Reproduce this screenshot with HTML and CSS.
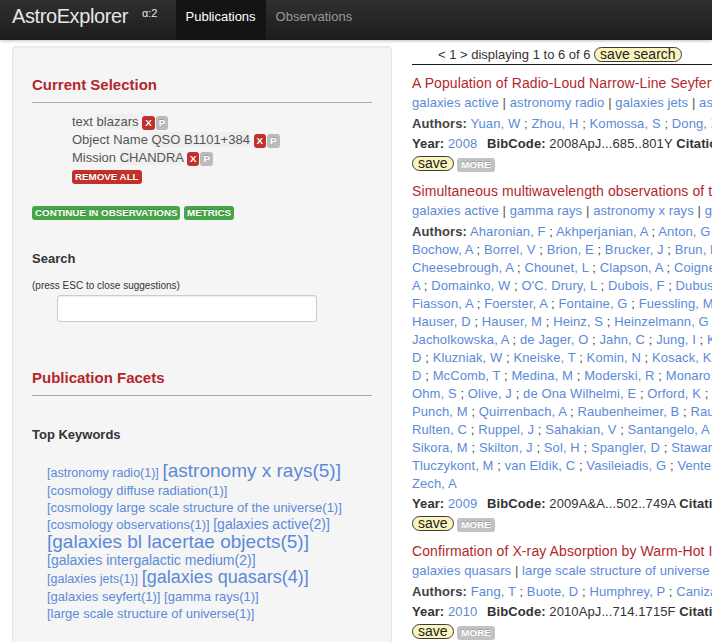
FILE: index.html
```html
<!DOCTYPE html>
<html lang="en">
<head>
<meta charset="utf-8">
<title>AstroExplorer</title>
<link rel="stylesheet" href="styles.css">
</head>
<body>
<header class="navbar">
  <a class="brand" href="#">AstroExplorer<sup>α:2</sup></a>
  <ul class="nav">
    <li class="active"><a href="#">Publications</a></li>
    <li><a href="#">Observations</a></li>
  </ul>
</header>

<div class="page">
  <aside class="sidebar">
    <h3 class="section-title">Current Selection</h3>
    <hr class="rule">
    <ul class="selection">
      <li>text <span class="sel-value">blazars</span> <span class="label label-danger">x</span><span class="label label-muted">p</span></li>
      <li>Object Name <span class="sel-value">QSO B1101+384</span> <span class="label label-danger">x</span><span class="label label-muted">p</span></li>
      <li>Mission <span class="sel-value">CHANDRA</span> <span class="label label-danger">x</span><span class="label label-muted">p</span></li>
      <li><span class="label label-danger">Remove all</span></li>
    </ul>
    <div class="actions"><span class="label label-success">Continue in observations</span> <span class="label label-success">Metrics</span></div>

    <h5 class="sub-title search-title">Search</h5>
    <p class="hint">(press ESC to close suggestions)</p>
    <div class="search-box"><input type="text" class="search-input"></div>

    <h3 class="section-title facets-title">Publication Facets</h3>
    <hr class="rule">
    <h5 class="sub-title kw-title">Top Keywords</h5>
    <div class="cloud">
      <a class="tag t1" href="#">[astronomy radio(1)]</a>
      <a class="tag t5" href="#">[astronomy x rays(5)]</a>
      <a class="tag t2" href="#">[cosmology diffuse radiation(1)]</a>
      <a class="tag t2" href="#">[cosmology large scale structure of the universe(1)]</a>
      <a class="tag t2" href="#">[cosmology observations(1)]</a>
      <a class="tag t3" href="#">[galaxies active(2)]</a>
      <a class="tag t5" href="#">[galaxies bl lacertae objects(5)]</a>
      <a class="tag t3" href="#">[galaxies intergalactic medium(2)]</a>
      <a class="tag t1" href="#">[galaxies jets(1)]</a>
      <a class="tag t4" href="#">[galaxies quasars(4)]</a>
      <a class="tag t2" href="#">[galaxies seyfert(1)]</a>
      <a class="tag t2" href="#">[gamma rays(1)]</a>
      <a class="tag t2" href="#">[large scale structure of universe(1)]</a>
    </div>
  </aside>

  <main class="results">
    <div class="paging">&lt; 1 &gt; displaying 1 to 6 of 6 <span class="pill">save search</span></div>

    <article class="pub">
      <h4 class="pub-title">A Population of Radio-Loud Narrow-Line Seyfert 1 Galaxies with Blazar-Like Properties?</h4>
      <div class="pub-kw"><a href="#">galaxies active</a> <span class="sep">|</span> <a href="#">astronomy radio</a> <span class="sep">|</span> <a href="#">galaxies jets</a> <span class="sep">|</span> <a href="#">astronomy x rays</a> <span class="sep">|</span> <a href="#">galaxies seyfert</a></div>
      <div class="pub-authors"><b>Authors:</b> <a href="#">Yuan, W</a> <span class="sep">;</span> <a href="#">Zhou, H</a> <span class="sep">;</span> <a href="#">Komossa, S</a> <span class="sep">;</span> <a href="#">Dong, X</a> <span class="sep">;</span> <a href="#">Wang, T</a> <span class="sep">;</span> <a href="#">Lu, H</a> <span class="sep">;</span> <a href="#">Bai, J</a></div>
      <div class="pub-meta"><b>Year:</b> <a class="year" href="#">2008</a> <b>BibCode:</b> 2008ApJ...685..801Y <b>Citations:</b> 139</div>
      <div class="pub-actions"><span class="pill">save</span> <span class="label label-light">More</span></div>
    </article>

    <article class="pub">
      <h4 class="pub-title">Simultaneous multiwavelength observations of the second exceptional γ-ray flare of PKS 2155-304 in July 2006</h4>
      <div class="pub-kw"><a href="#">galaxies active</a> <span class="sep">|</span> <a href="#">gamma rays</a> <span class="sep">|</span> <a href="#">astronomy x rays</a> <span class="sep">|</span> <a href="#">galaxies bl lacertae objects</a></div>
      <div class="pub-authors"><b>Authors:</b> <a href="#">Aharonian, F</a> ; <a href="#">Akhperjanian, A</a> ; <a href="#">Anton, G</a> ; <a href="#">Barres de Almeida, U</a> ; <a href="#">Bazer-Bachi, A</a> ; <a href="#">Becherini, Y</a> ;<br>
<a href="#">Bochow, A</a> ; <a href="#">Borrel, V</a> ; <a href="#">Brion, E</a> ; <a href="#">Brucker, J</a> ; <a href="#">Brun, F</a> ; <a href="#">Brun, P</a> ; <a href="#">Bühler, R</a> ; <a href="#">Bulik, T</a> ;<br>
<a href="#">Cheesebrough, A</a> ; <a href="#">Chounet, L</a> ; <a href="#">Clapson, A</a> ; <a href="#">Coignet, G</a> ; <a href="#">Costamante, L</a> ; <a href="#">Djannati-Ataï,</a><br>
<a href="#">A</a> ; <a href="#">Domainko, W</a> ; <a href="#">O'C. Drury, L</a> ; <a href="#">Dubois, F</a> ; <a href="#">Dubus, G</a> ; <a href="#">Dyks, J</a> ; <a href="#">Dyrda, M</a> ;<br>
<a href="#">Fiasson, A</a> ; <a href="#">Foerster, A</a> ; <a href="#">Fontaine, G</a> ; <a href="#">Fuessling, M</a> ; <a href="#">Gabici, S</a> ; <a href="#">Gallant, Y</a> ;<br>
<a href="#">Hauser, D</a> ; <a href="#">Hauser, M</a> ; <a href="#">Heinz, S</a> ; <a href="#">Heinzelmann, G</a> ; <a href="#">Henri, G</a> ; <a href="#">Hermann, G</a> ;<br>
<a href="#">Jacholkowska, A</a> ; <a href="#">de Jager, O</a> ; <a href="#">Jahn, C</a> ; <a href="#">Jung, I</a> ; <a href="#">Katarzyński, K</a> ; <a href="#">Khangulyan,</a><br>
<a href="#">D</a> ; <a href="#">Kluzniak, W</a> ; <a href="#">Kneiske, T</a> ; <a href="#">Komin, N</a> ; <a href="#">Kosack, K</a> ; <a href="#">Lohse, T</a> ; <a href="#">Maurin,</a><br>
<a href="#">D</a> ; <a href="#">McComb, T</a> ; <a href="#">Medina, M</a> ; <a href="#">Moderski, R</a> ; <a href="#">Monaro, G</a> ; <a href="#">Moulin, E</a> ;<br>
<a href="#">Ohm, S</a> ; <a href="#">Olive, J</a> ; <a href="#">de Ona Wilhelmi, E</a> ; <a href="#">Orford, K</a> ; <a href="#">Ostrowski, M</a> ; <a href="#">Panter, M</a> ;<br>
<a href="#">Punch, M</a> ; <a href="#">Quirrenbach, A</a> ; <a href="#">Raubenheimer, B</a> ; <a href="#">Raue, M</a> ; <a href="#">Rayner, S</a> ;<br>
<a href="#">Rulten, C</a> ; <a href="#">Ruppel, J</a> ; <a href="#">Sahakian, V</a> ; <a href="#">Santangelo, A</a> ; <a href="#">Schlickeiser, R</a> ;<br>
<a href="#">Sikora, M</a> ; <a href="#">Skilton, J</a> ; <a href="#">Sol, H</a> ; <a href="#">Spangler, D</a> ; <a href="#">Stawarz, Ł</a> ; <a href="#">Steenkamp, R</a> ;<br>
<a href="#">Tluczykont, M</a> ; <a href="#">van Eldik, C</a> ; <a href="#">Vasileiadis, G</a> ; <a href="#">Venter, C</a> ; <a href="#">Venter, L</a> ;<br>
<a href="#">Zech, A</a></div>
      <div class="pub-meta"><b>Year:</b> <a class="year" href="#">2009</a> <b>BibCode:</b> 2009A&amp;A...502..749A <b>Citations:</b> 88</div>
      <div class="pub-actions"><span class="pill">save</span> <span class="label label-light">More</span></div>
    </article>

    <article class="pub">
      <h4 class="pub-title">Confirmation of X-ray Absorption by Warm-Hot Intergalactic Gas in the Sculptor Wall</h4>
      <div class="pub-kw"><a href="#">galaxies quasars</a> <span class="sep">|</span> <a href="#">large scale structure of universe</a> <span class="sep">|</span> <a href="#">galaxies intergalactic medium</a></div>
      <div class="pub-authors"><b>Authors:</b> <a href="#">Fang, T</a> ; <a href="#">Buote, D</a> ; <a href="#">Humphrey, P</a> ; <a href="#">Canizares, C</a> ; <a href="#">Zappacosta, L</a></div>
      <div class="pub-meta"><b>Year:</b> <a class="year" href="#">2010</a> <b>BibCode:</b> 2010ApJ...714.1715F <b>Citations:</b> 52</div>
      <div class="pub-actions"><span class="pill">save</span> <span class="label label-light">More</span></div>
    </article>
  </main>
</div>
</body>
</html>
```

FILE: styles.css
```css
html, body {
  margin: 0;
  padding: 0;
  overflow: hidden;
}

body {
  font-family: "Liberation Sans", Arial, Helvetica, sans-serif;
  font-size: 13px;
  line-height: 18px;
  color: #333;
  background: #fff;
}

a {
  color: #5b8ad8;
  text-decoration: none;
}

/* ---------- navbar ---------- */
.navbar {
  display: flex;
  height: 40px;
  background: linear-gradient(#303030, #1c1c1c);
  box-shadow: 0 1px 3px rgba(0, 0, 0, 0.25);
  position: relative;
  z-index: 1;
}

.brand {
  display: block;
  padding: 4px 18px 12px 12px;
  font-size: 20px;
  line-height: 24px;
  letter-spacing: -0.4px;
  color: #e6e6e6;
}

.brand sup {
  font-size: 11px;
  line-height: 0;
  letter-spacing: 0;
  vertical-align: 6px;
  margin-left: 14px;
}

.nav {
  display: flex;
  list-style: none;
  margin: 0;
  padding: 0;
}

.nav a {
  display: block;
  padding: 7px 10px 14px;
  line-height: 19px;
  color: #999;
}

.nav .active a {
  background: #141414;
  color: #fff;
}

/* ---------- page ---------- */
.page {
  display: flex;
  align-items: flex-start;
  gap: 20px;
  padding: 6px 0 0 12px;
}

.sidebar {
  flex: 0 0 380px;
  box-sizing: border-box;
  min-height: 640px;
  padding: 28px 19px 30px;
  background: #f5f5f5;
  border: 1px solid #e6e6e6;
  border-radius: 4px;
  box-shadow: inset 0 1px 1px rgba(0, 0, 0, 0.04);
}

.section-title {
  margin: 0;
  font-size: 15px;
  line-height: 20px;
  font-weight: bold;
  color: #b3272d;
}

.rule {
  margin: 7px 0 0;
  height: 0;
  border: 0;
  border-top: 1px solid #a9a9a9;
}

.selection {
  list-style: none;
  margin: 10px 0 0;
  padding: 0 0 0 40px;
  color: #555;
}

.sel-value {
  background: rgba(0, 0, 0, 0.025);
}

.label {
  padding: 1px 3px 2px;
  font-size: 9.75px;
  font-weight: bold;
  line-height: 13px;
  color: #fff;
  text-transform: uppercase;
  white-space: nowrap;
  background: #999;
  border-radius: 3px;
  text-shadow: 0 -1px 0 rgba(0, 0, 0, 0.2);
}

.label-danger { background: #c4302b; }
.label-success { background: #46a546; }
.label-muted { background: #bbbbbb; margin-left: 1px; }
.label-light { background: #c2c2c2; padding: 1px 4px 2px; }

.actions {
  margin-top: 18px;
}

.sub-title {
  margin: 0;
  font-size: 13px;
  line-height: 18px;
  font-weight: bold;
  color: #333;
}

.search-title { margin-top: 29px; }

.hint {
  margin: 11px 0 0;
  font-size: 10px;
  line-height: 14px;
  color: #333;
}

.search-box {
  margin: 2px 0 0 25px;
}

.search-input {
  display: block;
  width: 260px;
  height: 27px;
  box-sizing: border-box;
  margin: 0;
  border: 1px solid #cccccc;
  border-radius: 3px;
  background: #fff;
  box-shadow: inset 0 1px 1px rgba(0, 0, 0, 0.075);
}

.facets-title { margin-top: 46px; }
.kw-title { margin-top: 30px; }

.cloud {
  margin-top: 18px;
  padding: 0 25px 0 15px;
  line-height: 17px;
}

.tag { white-space: nowrap; }
.tag.t1 { font-size: 12.5px; }
.tag.t2 { font-size: 13px; }
.tag.t3 { font-size: 14px; }
.tag.t4 { font-size: 18px; }
.tag.t5 { font-size: 19px; }

/* ---------- results ---------- */
.results {
  flex: 0 0 640px;
  white-space: nowrap;
  letter-spacing: 0.1px;
}

.paging {
  padding-left: 26px;
  line-height: 18px;
  border-bottom: 1px solid #1a1a1a;
  margin-bottom: 9px;
  color: #333;
  letter-spacing: 0;
}

.pill {
  display: inline-block;
  height: 13px;
  line-height: 13px;
  padding: 0 5px;
  font-size: 14px;
  letter-spacing: 0;
  color: #222;
  background: #fbf5bd;
  border: 1px solid #3a3a3a;
  border-radius: 8px;
}

.pub-title {
  margin: 0 0 2px;
  font-size: 14px;
  line-height: 18px;
  font-weight: normal;
  color: #b3272d;
}

.pub-kw { margin-bottom: 3px; }
.pub-authors { margin-bottom: 2px; color: #444; }
.pub-meta { margin-bottom: 2px; }
.pub-actions { margin-bottom: 9px; }

.sep { color: #555; }

.year { margin-right: 6px; }
```
